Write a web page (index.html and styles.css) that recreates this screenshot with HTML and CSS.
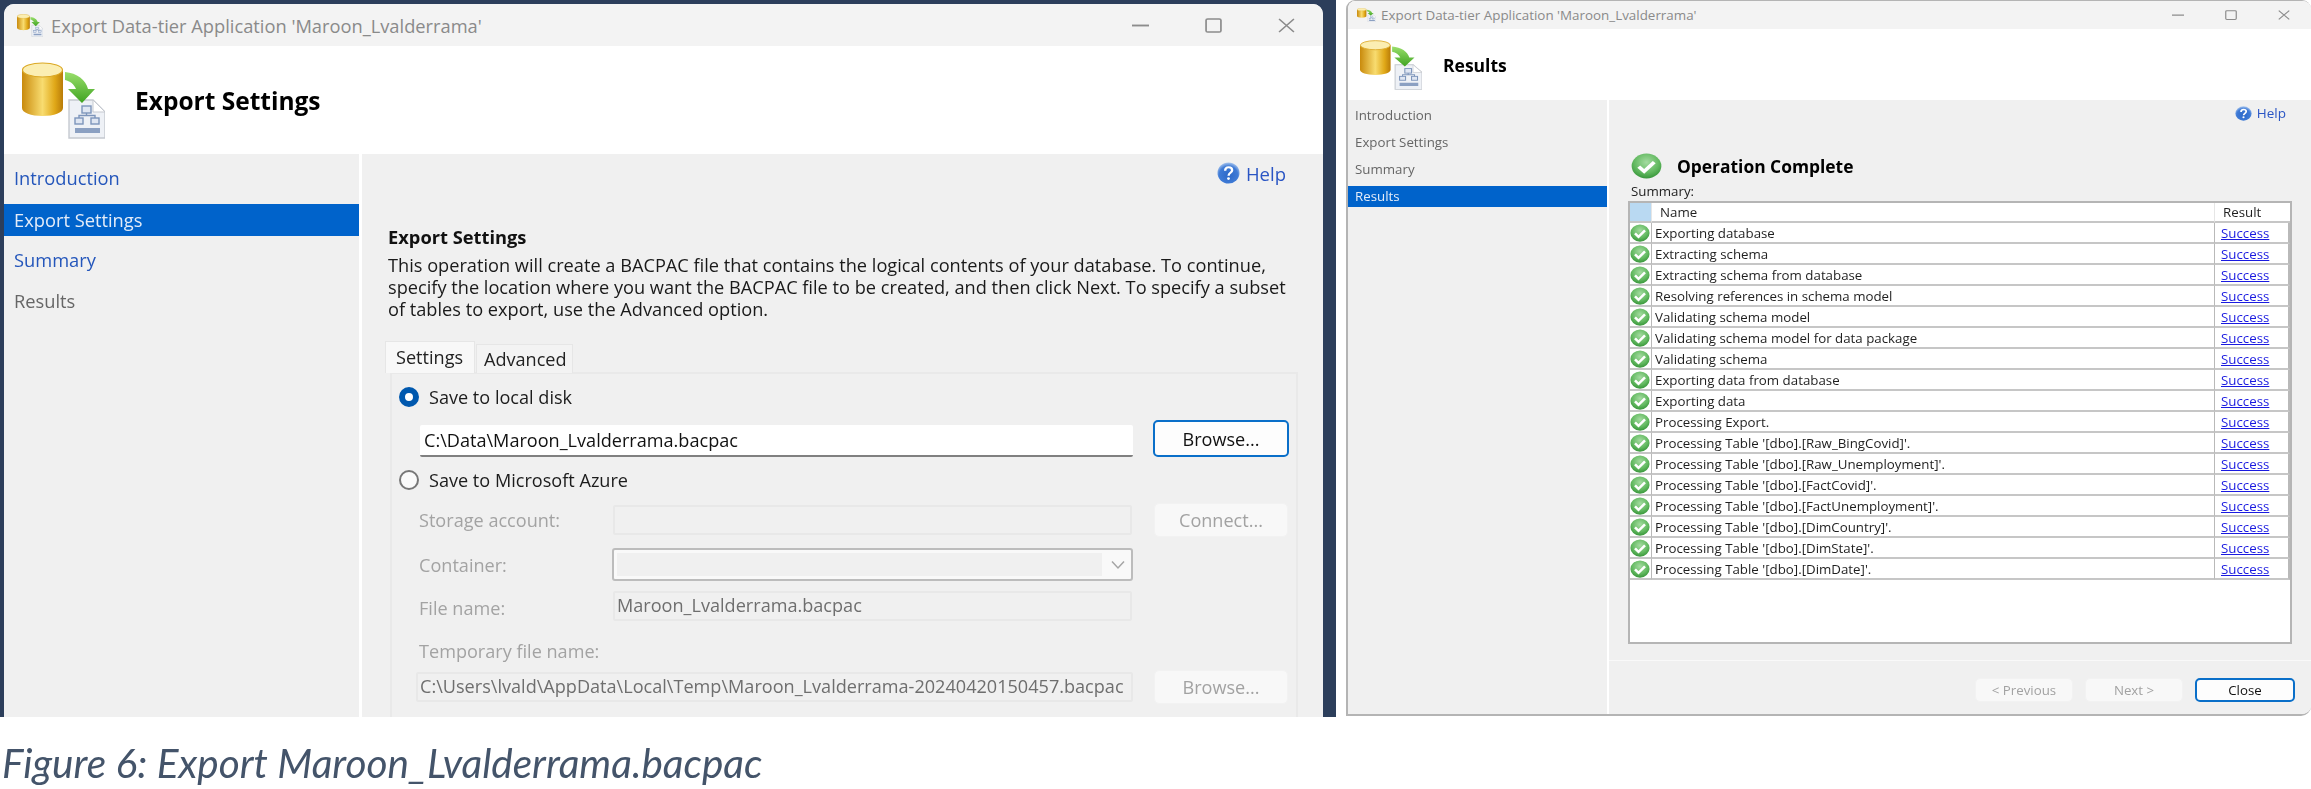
FILE: index.html
```html
<!DOCTYPE html>
<html lang="en">
<head>
  <meta charset="UTF-8" />
  <title>Figure 6: Export Maroon_Lvalderrama.bacpac</title>
  <link rel="stylesheet" href="styles.css">
</head>
<body>
  <!-- shared icons -->
  <svg class="defs" width="0" height="0" aria-hidden="true">
    <defs>
      <linearGradient id="gold" x1="0" x2="1" y1="0" y2="0">
        <stop offset="0" stop-color="#c98a0c" />
        <stop offset="0.5" stop-color="#f8dc70" />
        <stop offset="0.8" stop-color="#e0a818" />
        <stop offset="1" stop-color="#b97c08" />
      </linearGradient>
      <linearGradient id="leaf" x1="0" x2="0" y1="0" y2="1">
        <stop offset="0" stop-color="#9adf6c" />
        <stop offset="1" stop-color="#3fa321" />
      </linearGradient>
      <radialGradient id="okfill" cx="0.5" cy="0.35" r="0.7">
        <stop offset="0" stop-color="#a4dba0" />
        <stop offset="0.6" stop-color="#62b960" />
        <stop offset="1" stop-color="#2f8f32" />
      </radialGradient>
      <radialGradient id="helpfill" cx="0.5" cy="0.6" r="0.6">
        <stop offset="0" stop-color="#2c68c8" />
        <stop offset="0.7" stop-color="#3f7bd6" />
        <stop offset="1" stop-color="#a9c6ee" />
      </radialGradient>
    </defs>
    <symbol id="db-export" viewBox="0 0 83 77" preserveAspectRatio="none">
      <path d="M47 38h24l12 12v26H47z" fill="#eef1f6" stroke="#c5c9d0" stroke-width="1.4" />
      <path d="M71 38v12h12z" fill="#fff" stroke="#c5c9d0" />
      <g fill="#dfe6f2" stroke="#7d95bb" stroke-width="1.4">
        <rect x="60" y="44" width="9" height="7" />
        <rect x="53" y="56" width="8" height="6" />
        <rect x="69" y="56" width="8" height="6" />
      </g>
      <path d="M64.500 51v2.500M57 56v-2.500h16V56" fill="none" stroke="#7d95bb" stroke-width="1.4" />
      <path d="M53 66h25v5H53z" fill="#8ba0c2" />
      <path d="M0 8v38c0 4.500 9 8 20.500 8S41 50.500 41 46V8z" fill="url(#gold)" />
      <ellipse cx="20.500" cy="8" rx="20" ry="7" fill="#fbeeb2" stroke="#dba824" stroke-width="1.200" />
      <path d="M43 10c12 1 21 8 23 17h7L60 41 46 27h8c-2-5-6-8-11-9z" fill="url(#leaf)" />
    </symbol>
    <symbol id="ok" viewBox="0 0 24 24" preserveAspectRatio="none">
      <circle cx="12" cy="12" r="11.500" fill="url(#okfill)" />
      <path d="M6 12.500l4.200 4.500L18 8.500" fill="none" stroke="#fff" stroke-width="3" />
    </symbol>
    <symbol id="help" viewBox="0 0 24 24" preserveAspectRatio="none">
      <circle cx="12" cy="12" r="11.500" fill="url(#helpfill)" />
      <path d="M8.500 9.500c0-2.500 1.700-3.800 3.700-3.800s3.600 1.300 3.600 3.200c0 2.900-3.700 2.800-3.700 6" fill="none" stroke="#fff" stroke-width="2.400" />
      <circle cx="12" cy="18" r="1.500" fill="#fff" />
    </symbol>
    <symbol id="ctl-min" viewBox="0 0 16 16" preserveAspectRatio="none">
      <path d="M0 8h16" stroke="#8c8c8c" stroke-width="2" />
    </symbol>
    <symbol id="ctl-max" viewBox="0 0 16 16" preserveAspectRatio="none">
      <rect x="1" y="1" width="14" height="14" rx="1.500" fill="none" stroke="#8c8c8c" stroke-width="1.600" />
    </symbol>
    <symbol id="ctl-close" viewBox="0 0 16 16" preserveAspectRatio="none">
      <path d="M1 1l14 14M15 1L1 15" stroke="#8c8c8c" stroke-width="1.500" />
    </symbol>
  </svg>

  <div class="shots">
    <div class="desktop">
      <section class="window export-win">
        <div class="titlebar">
          <svg class="title-icon"><use href="#db-export" /></svg>
          <span class="title-text">Export Data-tier Application 'Maroon_Lvalderrama'</span>
          <div class="controls">
            <svg><use href="#ctl-min" /></svg>
            <svg><use href="#ctl-max" /></svg>
            <svg><use href="#ctl-close" /></svg>
          </div>
        </div>
        <div class="banner">
          <svg class="banner-icon"><use href="#db-export" /></svg>
          <h1>Export Settings</h1>
        </div>
        <div class="main">
          <nav class="steps">
            <a class="step done">Introduction</a>
            <a class="step active">Export Settings</a>
            <a class="step done">Summary</a>
            <a class="step">Results</a>
          </nav>
          <div class="content">
            <div class="help-row">
              <svg><use href="#help" /></svg>
              <a>Help</a>
            </div>
            <h2>Export Settings</h2>
            <p class="intro">This operation will create a BACPAC file that contains the logical contents of your database. To continue, specify the location where you want the BACPAC file to be created, and then click Next. To specify a subset of tables to export, use the Advanced option.</p>
            <div class="tabs">
              <span class="tab current">Settings</span>
              <span class="tab">Advanced</span>
            </div>
            <div class="panel">
              <label class="radio-row first">
                <span class="radio on"></span>Save to local disk
              </label>
              <div class="path-row">
                <div class="path-input">C:\Data\Maroon_Lvalderrama.bacpac</div>
                <button class="btn focus">Browse...</button>
              </div>
              <label class="radio-row second">
                <span class="radio"></span>Save to Microsoft Azure
              </label>
              <div class="azure">
                <div class="form-row storage">
                  <span class="form-label">Storage account:</span>
                  <div class="field"></div>
                  <button class="btn off">Connect...</button>
                </div>
                <div class="form-row container">
                  <span class="form-label">Container:</span>
                  <div class="select">
                    <div class="select-inner"></div>
                    <svg width="16" height="10" viewBox="0 0 16 10"><path d="M2 1.500l6 6.500 6-6.500" fill="none" stroke="#a5a5a5" stroke-width="1.500" /></svg>
                  </div>
                </div>
                <div class="form-row filename">
                  <span class="form-label">File name:</span>
                  <div class="field">Maroon_Lvalderrama.bacpac</div>
                </div>
                <div class="form-label temp-label">Temporary file name:</div>
                <div class="temp-row">
                  <div class="field temp-field">C:\Users\lvald\AppData\Local\Temp\Maroon_Lvalderrama-20240420150457.bacpac</div>
                  <button class="btn off">Browse...</button>
                </div>
              </div>
            </div>
          </div>
        </div>
      </section>
    </div>

    <section class="window results-win">
      <div class="titlebar">
        <svg class="title-icon"><use href="#db-export" /></svg>
        <span class="title-text">Export Data-tier Application 'Maroon_Lvalderrama'</span>
        <div class="controls">
          <svg><use href="#ctl-min" /></svg>
          <svg><use href="#ctl-max" /></svg>
          <svg><use href="#ctl-close" /></svg>
        </div>
      </div>
      <div class="banner">
        <svg class="banner-icon"><use href="#db-export" /></svg>
        <h1>Results</h1>
      </div>
      <div class="main">
        <nav class="steps">
          <a class="step">Introduction</a>
          <a class="step">Export Settings</a>
          <a class="step">Summary</a>
          <a class="step active">Results</a>
        </nav>
        <div class="content">
          <div class="help-row">
            <svg><use href="#help" /></svg>
            <a>Help</a>
          </div>
          <div class="status">
            <svg><use href="#ok" /></svg>
            <strong>Operation Complete</strong>
          </div>
          <div class="summary-label">Summary:</div>
          <div class="grid-box">
            <table class="grid">
              <thead>
                <tr><th class="corner"></th><th class="name-head">Name</th><th>Result</th></tr>
              </thead>
              <tbody>
                <tr><td><svg><use href="#ok" /></svg></td><td>Exporting database</td><td><a>Success</a></td></tr>
                <tr><td><svg><use href="#ok" /></svg></td><td>Extracting schema</td><td><a>Success</a></td></tr>
                <tr><td><svg><use href="#ok" /></svg></td><td>Extracting schema from database</td><td><a>Success</a></td></tr>
                <tr><td><svg><use href="#ok" /></svg></td><td>Resolving references in schema model</td><td><a>Success</a></td></tr>
                <tr><td><svg><use href="#ok" /></svg></td><td>Validating schema model</td><td><a>Success</a></td></tr>
                <tr><td><svg><use href="#ok" /></svg></td><td>Validating schema model for data package</td><td><a>Success</a></td></tr>
                <tr><td><svg><use href="#ok" /></svg></td><td>Validating schema</td><td><a>Success</a></td></tr>
                <tr><td><svg><use href="#ok" /></svg></td><td>Exporting data from database</td><td><a>Success</a></td></tr>
                <tr><td><svg><use href="#ok" /></svg></td><td>Exporting data</td><td><a>Success</a></td></tr>
                <tr><td><svg><use href="#ok" /></svg></td><td>Processing Export.</td><td><a>Success</a></td></tr>
                <tr><td><svg><use href="#ok" /></svg></td><td>Processing Table '[dbo].[Raw_BingCovid]'.</td><td><a>Success</a></td></tr>
                <tr><td><svg><use href="#ok" /></svg></td><td>Processing Table '[dbo].[Raw_Unemployment]'.</td><td><a>Success</a></td></tr>
                <tr><td><svg><use href="#ok" /></svg></td><td>Processing Table '[dbo].[FactCovid]'.</td><td><a>Success</a></td></tr>
                <tr><td><svg><use href="#ok" /></svg></td><td>Processing Table '[dbo].[FactUnemployment]'.</td><td><a>Success</a></td></tr>
                <tr><td><svg><use href="#ok" /></svg></td><td>Processing Table '[dbo].[DimCountry]'.</td><td><a>Success</a></td></tr>
                <tr><td><svg><use href="#ok" /></svg></td><td>Processing Table '[dbo].[DimState]'.</td><td><a>Success</a></td></tr>
                <tr><td><svg><use href="#ok" /></svg></td><td>Processing Table '[dbo].[DimDate]'.</td><td><a>Success</a></td></tr>
              </tbody>
            </table>
          </div>
          <div class="footer">
            <button class="btn off">&lt; Previous</button>
            <button class="btn off">Next &gt;</button>
            <button class="btn focus">Close</button>
          </div>
        </div>
      </div>
    </section>
  </div>

  <p class="caption">Figure 6: Export Maroon_Lvalderrama.bacpac</p>
</body>
</html>
```

FILE: styles.css
```css
* {
  box-sizing: border-box;
}
html, body {
  margin: 0;
  background: #fff;
}
body {
  width: 2311px;
  height: 789px;
  overflow: hidden;
  font-family: "Open Sans", sans-serif;
}
.defs {
  position: absolute;
}
.shots {
  display: flex;
  align-items: flex-start;
  height: 717px;
}
.desktop {
  width: 1336px;
  height: 717px;
  padding: 4px 13px 0 4px;
  background: #2c3e5b;
}

/* both dialogs share this frame */
.window {
  display: flex;
  flex-direction: column;
  overflow: hidden;
  background: #fff;
  filter: blur(0.45px);
}
.titlebar {
  display: flex;
  align-items: center;
  flex: none;
  background: #f3f3f3;
  color: #8a8a8a;
}
.controls {
  display: flex;
  margin-left: auto;
}
.banner {
  display: flex;
  align-items: center;
  flex: none;
  background: #fff;
}
.banner h1 {
  margin: 0;
  color: #000;
}
.main {
  display: flex;
  flex: 1;
  min-height: 0;
}
.steps {
  display: flex;
  flex-direction: column;
  flex: none;
  background: #f0f0f0;
}
.step {
  color: #666;
}
.step.done {
  color: #2456bb;
}
.step.active {
  background: #0063cb;
  color: #e4ecf8;
}
.content {
  display: flex;
  flex-direction: column;
  flex: 1;
  min-width: 0;
  background: #f0f0f0;
}
.help-row {
  display: flex;
  align-items: center;
  justify-content: flex-end;
  color: #2a55c4;
}
.btn {
  font-family: inherit;
  border-radius: 5px;
  background: #fdfdfd;
  color: #111;
  padding: 0;
}
.btn.focus {
  border: 2px solid #0a6fc9;
}
.btn.off {
  border: 1px solid #f2f2f2;
  background: #f8f8f8;
  color: #a2a2a2;
}

/* left dialog */
.export-win {
  width: 1319px;
  height: 713px;
  border-radius: 10px 10px 0 0;
}
.export-win .titlebar {
  height: 42px;
  padding: 0 28px 0 13px;
}
.export-win .title-icon {
  width: 26px;
  height: 23px;
  margin-right: 8px;
}
.export-win .title-text {
  font-size: 18.300px;
}
.export-win .controls {
  gap: 56px;
}
.export-win .controls svg {
  width: 17px;
  height: 15px;
}
.export-win .banner {
  height: 108px;
  padding-left: 18px;
}
.export-win .banner-icon {
  width: 83px;
  height: 77px;
  margin-right: 30px;
}
.export-win h1 {
  font-size: 24.500px;
  font-weight: 700;
}
.export-win .main {
  gap: 3px;
}
.export-win .steps {
  width: 355px;
  gap: 9px;
  padding-top: 8px;
}
.export-win .step {
  height: 32px;
  padding-left: 10px;
  font-size: 18.300px;
  line-height: 32px;
}
.export-win .step.active {
  margin-top: 1px;
  margin-bottom: -1px;
}
.export-win .content {
  padding-left: 26px;
}
.export-win .help-row {
  height: 22px;
  margin-top: 8px;
  padding-right: 37px;
  gap: 6px;
  font-size: 18.500px;
}
.export-win .help-row svg {
  width: 23px;
  height: 22px;
}
.export-win h2 {
  margin: 42px 0 6px;
  font-size: 18.300px;
  line-height: 22px;
  font-weight: 700;
  color: #111;
}
.intro {
  width: 912px;
  margin: 0;
  font-size: 18.200px;
  line-height: 22px;
  color: #1a1a1a;
}
.tabs {
  display: flex;
  align-items: flex-end;
  height: 32px;
  margin: 21px 0 -1px -3px;
  position: relative;
  font-size: 18.100px;
}
.tab {
  width: 97px;
  height: 29px;
  margin-left: 1px;
  padding-left: 7px;
  background: #f3f3f3;
  border: 1px solid #e6e6e6;
  border-bottom: 0;
  line-height: 28px;
  color: #222;
}
.tab.current {
  width: 90px;
  height: 32px;
  margin-left: 0;
  padding-left: 10px;
  background: #f8f8f8;
  line-height: 30px;
}
.panel {
  flex: 1;
  width: 908px;
  margin-left: 2px;
  padding: 11px 0 0 7px;
  border: 2px solid #e9e9e9;
  border-bottom: 0;
  font-size: 18.100px;
  color: #1c1c1c;
}
.radio-row {
  display: flex;
  align-items: center;
  gap: 10px;
  height: 24px;
}
.radio-row.second {
  margin-top: 11px;
}
.radio {
  width: 20px;
  height: 20px;
  border: 2px solid #777;
  border-radius: 50%;
  background: #fafafa;
}
.radio.on {
  border: 6px solid #0058ae;
  background: #fff;
}
.path-row {
  display: flex;
  align-items: flex-end;
  gap: 20px;
  margin: 11px 0 0 21px;
}
.path-input {
  width: 713px;
  height: 32px;
  padding-left: 4px;
  background: #fff;
  border-bottom: 2px solid #808080;
  border-radius: 2px;
  line-height: 30px;
  color: #111;
}
.path-row .btn {
  width: 136px;
  height: 37px;
  font-size: 18.100px;
}
.azure {
  margin: 11px 0 0 20px;
  color: #a3a3a3;
}
.form-row {
  display: flex;
  align-items: center;
}
.form-label {
  flex: none;
  width: 194px;
}
.storage {
  height: 34px;
}
.storage .field {
  margin-right: 22px;
}
.storage .btn {
  width: 134px;
  height: 34px;
  font-size: 18.100px;
}
.field {
  width: 519px;
  height: 30px;
  padding-left: 2px;
  border: 2px solid #e8e8e8;
  border-radius: 2px;
  line-height: 24px;
  color: #6e6e6e;
}
.container {
  height: 33px;
  margin-top: 11px;
}
.select {
  display: flex;
  align-items: center;
  width: 521px;
  height: 33px;
  margin-left: -1px;
  padding: 3px 0 3px 3px;
  border: 2px solid #bcbcbc;
  border-radius: 3px;
  background: #f9f9f9;
}
.select-inner {
  width: 485px;
  height: 100%;
  margin-right: 8px;
  background: #f0f0f0;
}
.filename {
  margin-top: 10px;
}
.filename .form-label {
  padding-top: 3px;
}
.temp-label {
  width: auto;
  margin-top: 19px;
  line-height: 22px;
}
.temp-row {
  display: flex;
  align-items: center;
  gap: 21px;
  height: 34px;
  margin: 8px 0 0 -3px;
}
.temp-field {
  width: 717px;
  white-space: nowrap;
}
.temp-row .btn {
  width: 134px;
  height: 34px;
  font-size: 18.100px;
}

/* right dialog */
.results-win {
  width: 965px;
  height: 716px;
  margin-left: 10px;
  border: 2px solid #b4b4b4;
  border-width: 1px 0 2px 2px;
  border-radius: 9px 9px 10px 0;
}
.results-win .titlebar {
  height: 28px;
  padding: 0 21px 0 9px;
}
.results-win .title-icon {
  width: 19px;
  height: 14px;
  margin-right: 5px;
}
.results-win .title-text {
  font-size: 13.400px;
}
.results-win .controls {
  gap: 41px;
}
.results-win .controls svg {
  width: 12px;
  height: 10px;
}
.results-win .banner {
  height: 71px;
  padding-left: 12px;
}
.results-win .banner-icon {
  width: 62px;
  height: 50px;
  margin-right: 21px;
}
.results-win h1 {
  font-size: 17.500px;
  font-weight: 700;
}
.results-win .main {
  gap: 2px;
}
.results-win .steps {
  width: 259px;
  gap: 6px;
  padding-top: 5px;
}
.results-win .step {
  height: 21px;
  padding-left: 7px;
  font-size: 13.300px;
  line-height: 21px;
}
.results-win .help-row {
  height: 18px;
  margin-top: 4px;
  padding-right: 25px;
  gap: 5px;
  font-size: 13.500px;
}
.results-win .help-row svg {
  width: 17px;
  height: 15px;
}
.status {
  display: flex;
  align-items: center;
  gap: 15px;
  height: 27px;
  margin: 30px 0 0 22px;
  font-size: 17.400px;
  color: #000;
}
.status svg {
  width: 31px;
  height: 26px;
}
.summary-label {
  margin: 4px 0 2px 22px;
  font-size: 13.300px;
  line-height: 16px;
  color: #222;
}
.grid-box {
  width: 664px;
  height: 443px;
  margin-left: 19px;
  background: #fff;
  border: 2px solid #b5b5b5;
}
.grid {
  width: 660px;
  table-layout: fixed;
  border-collapse: separate;
  border-spacing: 0;
  font-size: 13.300px;
  color: #1f1f1f;
}
.grid th {
  height: 20px;
  padding: 0 0 0 8px;
  font-weight: 400;
  text-align: left;
  border-bottom: 2px solid #c6c6c6;
  border-left: 1px solid #e6e6e6;
}
.grid th.corner {
  width: 21px;
  background: #b9d9f2;
  border-left: 0;
}
.grid th:last-child {
  width: 76px;
}
.grid td {
  height: 21px;
  padding: 0 0 0 3px;
  border-bottom: 2px solid #c6c6c6;
  border-left: 1px solid #b9b9b9;
  line-height: 18px;
  white-space: nowrap;
  overflow: hidden;
}
.grid td:first-child {
  padding: 0;
  border-left: 0;
}
.grid td:last-child {
  padding-left: 6px;
  border-right: 2px solid #b9b9b9;
}
.grid svg {
  display: block;
  width: 20px;
  height: 18px;
}
.grid a {
  color: #1a1ae0;
  text-decoration: underline;
}
.footer {
  display: flex;
  justify-content: flex-end;
  gap: 12px;
  margin-top: 16px;
  padding: 17px 16px 0 0;
  border-top: 1px solid #f9f9f9;
}
.footer .btn {
  width: 98px;
  height: 24px;
  font-size: 13.300px;
}
.footer .btn.focus {
  width: 100px;
}

.caption {
  margin: 23px 0 0 2px;
  font-family: Lato, sans-serif;
  font-style: italic;
  font-size: 40.500px;
  line-height: 46px;
  color: #44546a;
  filter: blur(0.3px);
}
```
